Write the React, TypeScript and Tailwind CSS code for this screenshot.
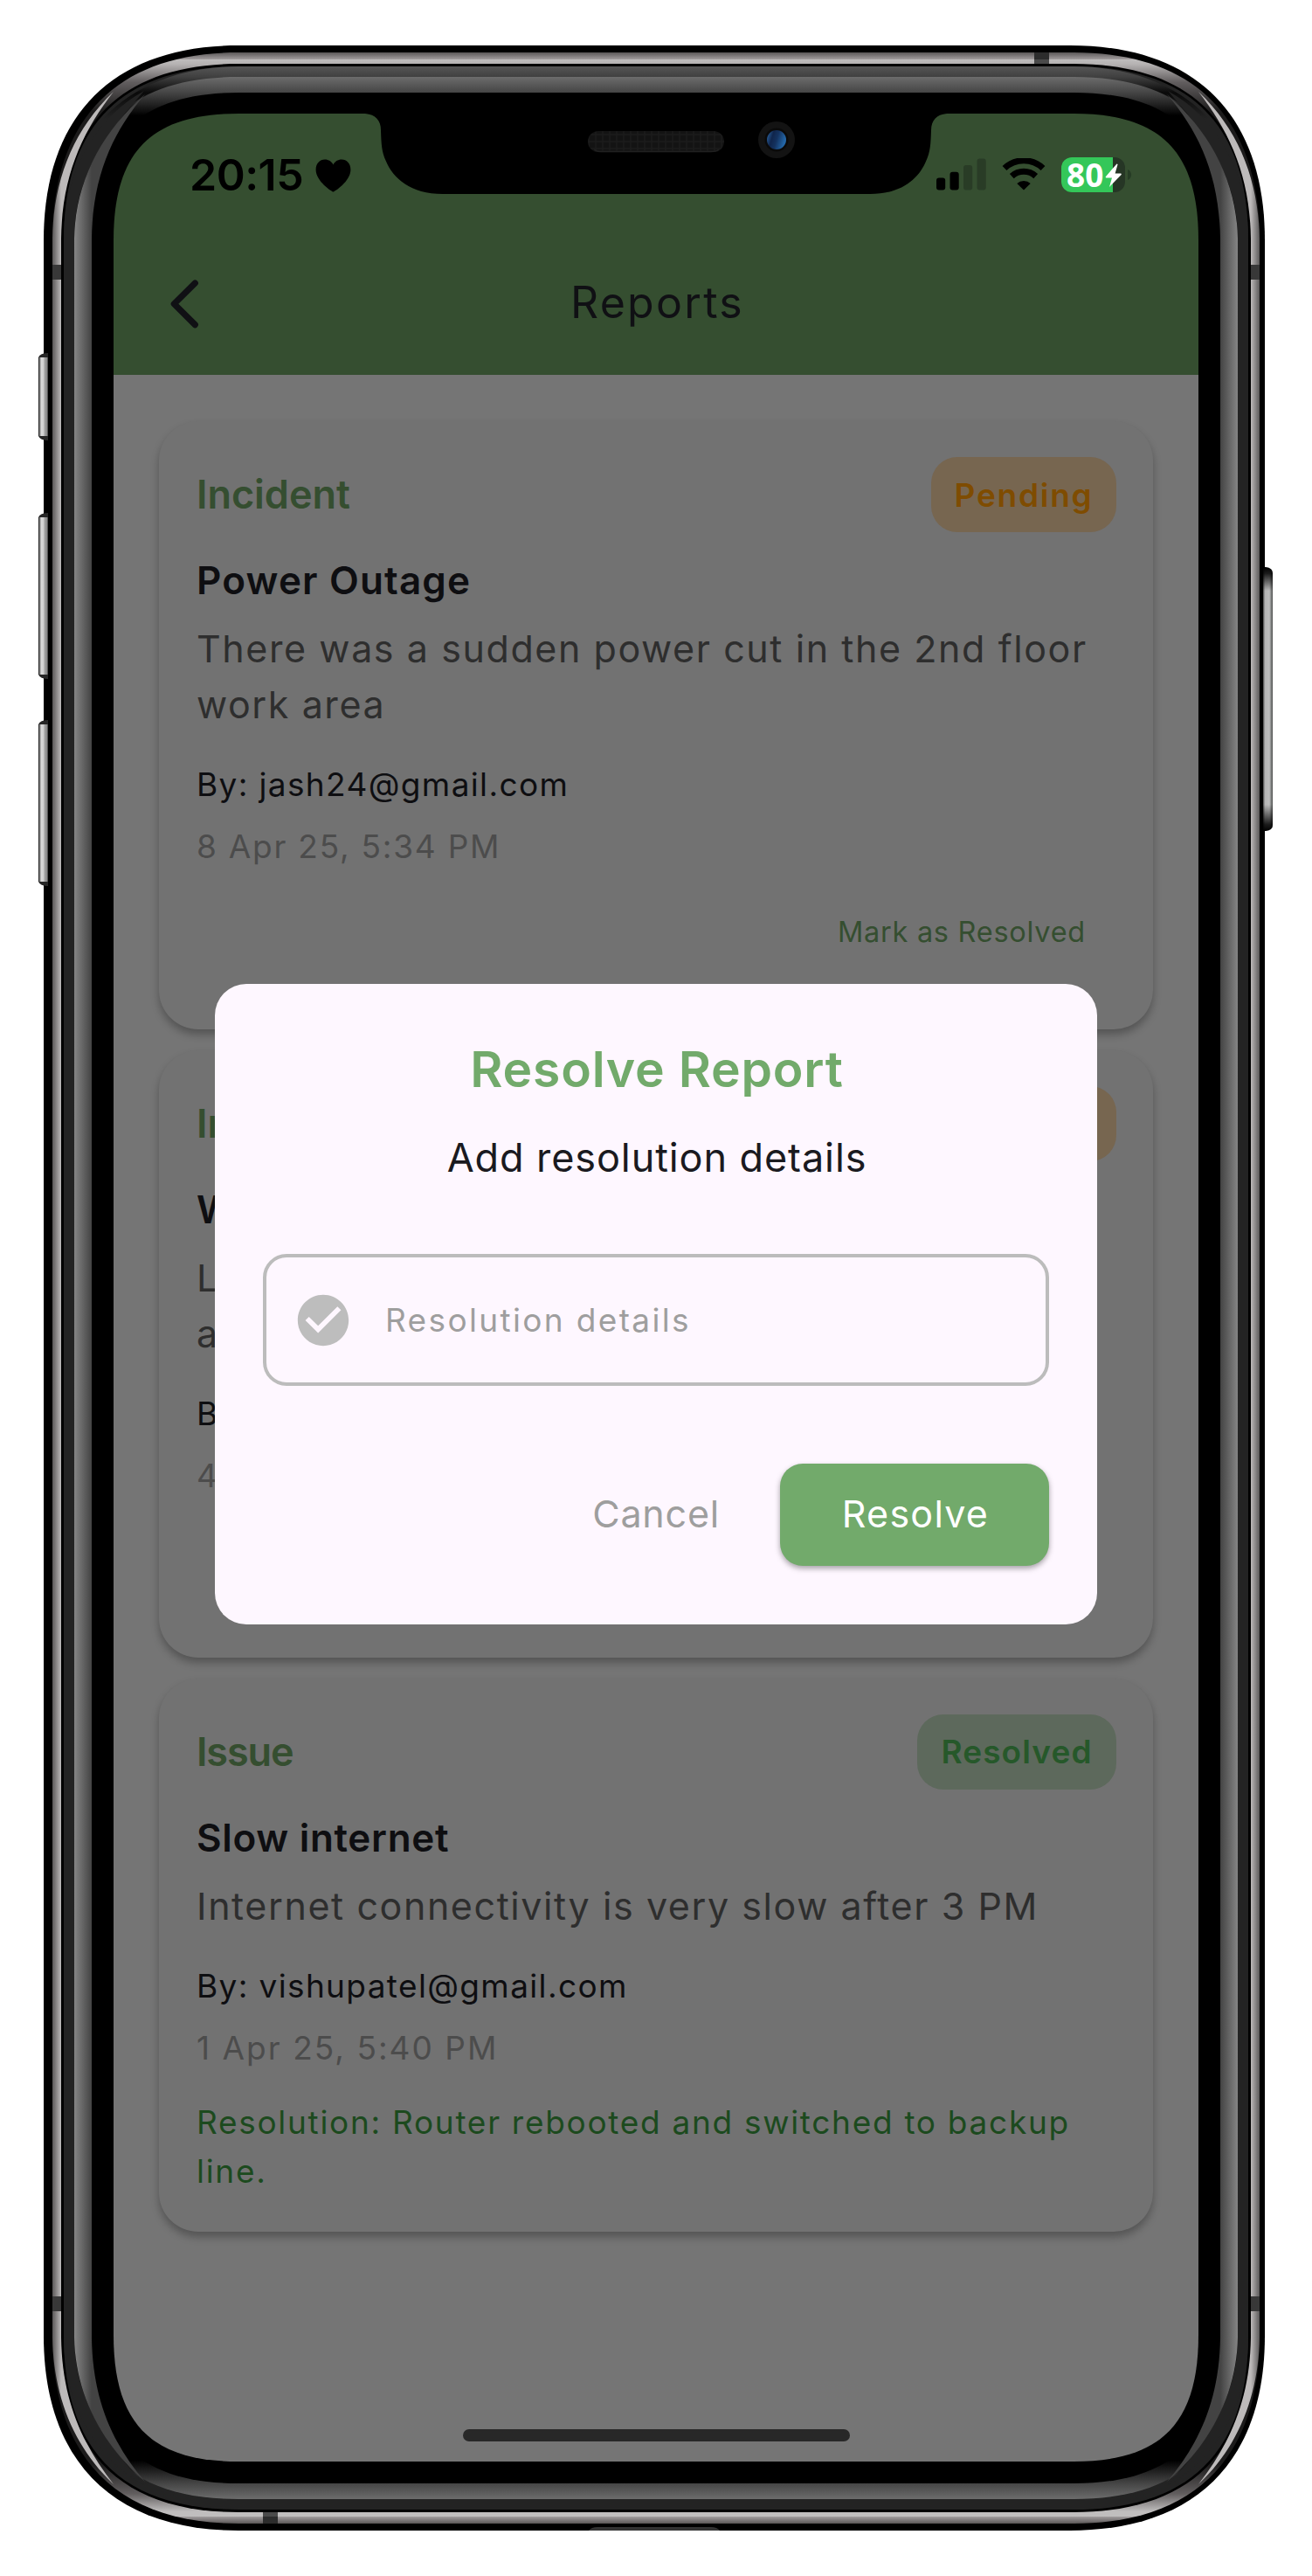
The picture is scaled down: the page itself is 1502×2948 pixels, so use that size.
import { MdCheckCircle } from "react-icons/md";

type Report = {
  kind: string;
  kindTracking: string;
  status: "Pending" | "Resolved";
  title: string;
  titleTracking: string;
  body: string;
  by: string;
  date: string;
  dateTracking: string;
  resolution?: string;
  height: string;
};

const reports: Report[] = [
  {
    kind: "Incident",
    kindTracking: "tracking-[-0.03px]",
    status: "Pending",
    title: "Power Outage",
    titleTracking: "tracking-[1.15px]",
    body: "There was a sudden power cut in the 2nd floor work area",
    by: "jash24@gmail.com",
    date: "8 Apr 25, 5:34 PM",
    dateTracking: "tracking-[1.76px]",
    height: "h-[695.5px]",
  },
  {
    kind: "Incident",
    kindTracking: "tracking-[-0.03px]",
    status: "Pending",
    title: "Water Leakage",
    titleTracking: "tracking-[1.15px]",
    body: "Leakage was noticed near the pantry sink area and corridor",
    by: "jash24@gmail.com",
    date: "4 Apr 25, 5:34 PM",
    dateTracking: "tracking-[1.76px]",
    height: "h-[695.5px]",
  },
  {
    kind: "Issue",
    kindTracking: "tracking-[-1.1px]",
    status: "Resolved",
    title: "Slow internet",
    titleTracking: "tracking-[0.69px]",
    body: "Internet connectivity is very slow after 3 PM",
    by: "vishupatel@gmail.com",
    date: "1 Apr 25, 5:40 PM",
    dateTracking: "tracking-[2.03px]",
    resolution: "Router rebooted and switched to backup line.",
    height: "h-[633px]",
  },
];

function StatusBar() {
  return (
    <div className="flex h-[140px] shrink-0 items-center justify-between pl-[87px] pr-[74px]">
      <div className="flex items-center gap-[14px]">
        <span className="text-[50px] leading-[60px] font-semibold tracking-[-0.5px] text-black">20:15</span>
        <svg width="41" height="38" viewBox="0 0 41 38" className="mt-px">
          <path
            d="M20.5 37.5C19.4 37.5 0.6 25.6 0.6 12.2C0.6 5.2 5.2 0.6 10.9 0.6C15.2 0.6 18.6 2.9 20.5 6.5C22.4 2.9 25.8 0.6 30.1 0.6C35.8 0.6 40.4 5.2 40.4 12.2C40.4 25.6 21.6 37.5 20.5 37.5Z"
            fill="#000"
          />
        </svg>
      </div>
      <div className="flex items-center gap-[18px]">
        <svg width="57" height="38" viewBox="0 0 57 38">
          <rect x="0" y="22.5" width="10.2" height="14" rx="3" fill="#000" />
          <rect x="15.5" y="15.8" width="10.2" height="20.7" rx="3" fill="#000" />
          <rect x="31" y="8" width="10.2" height="28.5" rx="3" fill="#293c26" />
          <rect x="46.5" y="0.4" width="10.2" height="36.1" rx="3" fill="#293c26" />
        </svg>
        <svg width="50" height="38" viewBox="0 0 50 38">
          <path d="M3 11.5A32 32 0 0 1 47 11.5" fill="none" stroke="#000" strokeWidth="7" />
          <path d="M11.3 20.6A20 20 0 0 1 38.7 20.6" fill="none" stroke="#000" strokeWidth="7" />
          <path d="M25 36.6L17.3 29A11.4 11.4 0 0 1 32.7 29Z" fill="#000" />
        </svg>
        <div className="flex items-center">
          <div className="relative flex h-[40px] w-[73px] items-center overflow-hidden rounded-[12px] bg-[#263625]">
            <div className="absolute inset-y-0 left-0 w-[59px] bg-[#34c759]" />
            <span className="relative pl-[6px] font-['Open_Sans'] text-[37px] leading-[40px] font-bold text-white">80</span>
            <svg className="absolute left-[50px] top-[7px]" width="20" height="28" viewBox="0 0 20 28">
              <path d="M13.5 0.5L0.8 15.2Q0.4 16.4 1.6 16.4H8L5 27L18.6 13Q19.4 11.6 17.8 11.4H11.6L14.6 1Z" fill="#fff" />
            </svg>
          </div>
          <svg width="7" height="12" viewBox="0 0 7 12" className="ml-[3px]">
            <path d="M0 0C5.5 2 5.5 10 0 12Z" fill="#263c25" />
          </svg>
        </div>
      </div>
    </div>
  );
}

function TitleBar() {
  return (
    <div className="relative flex flex-1 items-start justify-center pt-[48px]">
      <svg className="absolute left-[64px] top-[48px]" width="36" height="60" viewBox="0 0 36 60">
        <path d="M29.3 6L5.3 29.8L29.3 53.6" fill="none" stroke="#101014" strokeWidth="7.2" strokeLinecap="round" strokeLinejoin="round" />
      </svg>
      <h1 className="pl-[3px] text-[50px] leading-[56px] tracking-[2.3px] text-[#101014]">Reports</h1>
    </div>
  );
}

function StatusBadge({ status }: { status: Report["status"] }) {
  return status === "Pending" ? (
    <span className="flex h-[86px] w-[212px] items-center justify-center rounded-[30px] bg-[#776650] pt-[2px] text-[37px] font-semibold tracking-[1.75px] text-[#7f4c00]">
      Pending
    </span>
  ) : (
    <span className="flex h-[86px] w-[228px] items-center justify-center rounded-[30px] bg-[#5d695c] text-[37px] font-semibold tracking-[1.1px] text-[#26582a]">
      Resolved
    </span>
  );
}

function ReportCard({ report }: { report: Report }) {
  return (
    <article
      className={`${report.height} flex shrink-0 flex-col rounded-[45px] bg-[#727272] pt-[41px] pr-[42px] pl-[43px] shadow-[0_6px_10px_0px_rgba(0,0,0,0.28)]`}
    >
      <div className="flex h-[86px] items-center justify-between">
        <h2 className={`${report.kindTracking} text-[45px] leading-[60px] font-semibold text-[#354e30]`}>{report.kind}</h2>
        <StatusBadge status={report.status} />
      </div>
      <h3 className={`${report.titleTracking} mt-[25px] text-[44px] leading-[60px] font-semibold text-[#0e0e11]`}>{report.title}</h3>
      <p className="-mr-[6px] mt-[16px] text-[43px] leading-[64px] tracking-[1.58px] text-[#2e2e2e]">{report.body}</p>
      <p className="mt-[35px] text-[37px] leading-[50px] tracking-[1.36px] text-[#0e0e11]">By: {report.by}</p>
      <p className={`${report.dateTracking} mt-[21px] text-[37px] leading-[50px] text-[#4c4c4c]`}>{report.date}</p>
      {report.resolution ? (
        <p className="mt-[32px] text-[37px] leading-[55.5px] tracking-[1.7px] text-[#1c4a1e]">Resolution: {report.resolution}</p>
      ) : (
        <button className="mt-[48px] mr-[35px] self-end text-[32.5px] leading-[50px] tracking-[0.73px] text-[#354e30]">Mark as Resolved</button>
      )}
    </article>
  );
}

function ResolveDialog() {
  return (
    <div
      role="dialog"
      className="absolute left-[116px] top-[995.5px] flex h-[733px] w-[1010px] flex-col rounded-[36px] bg-[#fef7ff] px-[55px] pt-[60px]"
    >
      <h2 className="pl-[2px] text-center text-[57px] leading-[76px] font-semibold tracking-[0.8px] text-[#72aa6b]">Resolve Report</h2>
      <p className="mt-[33px] pl-[2px] text-center text-[45px] leading-[60px] tracking-[0.9px] text-[#1a1a1f]">Add resolution details</p>
      <label className="mt-[80.5px] flex h-[151px] items-center rounded-[27px] border-4 border-[#bcbcbc] pl-[30px]">
        <MdCheckCircle className="size-[70px] text-[#bdbdbd]" />
        <span className="ml-[36px] text-[37px] leading-[50px] tracking-[2.35px] text-[#9e9e9e]">Resolution details</span>
      </label>
      <div className="mt-[88.5px] flex h-[117px] items-center justify-end">
        <button className="mr-[69px] pb-[2px] text-[43px] tracking-[0.8px] text-[#9e9e9e]">Cancel</button>
        <button className="h-[117px] w-[308px] rounded-[26px] bg-[#72aa6b] pb-[2px] pl-[2px] text-[43px] tracking-[1.25px] text-white shadow-[0_3px_6px_rgba(0,0,0,0.35)]">
          Resolve
        </button>
      </div>
    </div>
  );
}

/** Rounded rectangle with continuous corners that begin at `corner` on both axes. */
function shell(x0: number, y0: number, x1: number, y1: number, k: number, corner = 273) {
  const lx = corner - x0;
  const ly = corner + 2 - y0;
  const hx = lx * (1 - k);
  const hy = ly * (1 - k);
  return [
    `M${x0 + lx} ${y0}H${x1 - lx}`,
    `C${x1 - hx} ${y0} ${x1} ${y0 + hy} ${x1} ${y0 + ly}`,
    `V${y1 - ly}`,
    `C${x1} ${y1 - hy} ${x1 - hx} ${y1} ${x1 - lx} ${y1}`,
    `H${x0 + lx}`,
    `C${x0 + hx} ${y1} ${x0} ${y1 - hy} ${x0} ${y1 - ly}`,
    `V${y0 + ly}`,
    `C${x0} ${y0 + hy} ${x0 + hx} ${y0} ${x0 + lx} ${y0}Z`,
  ].join("");
}

const NOTCH = "M418 130C430 131 436 138 436 149C436.5 165 437 174 441.7 184C450 204 470 222 507 222H996C1033 222 1052 204 1060.3 184C1065 174 1065.5 165 1066 149C1066 138 1072 131 1084 130V129H418Z";

function SideHighlights() {
  return (
    <g>
      <path d="M73 273C73 200 108 135 165 104C125 150 85 200 85 273V2675C85 2748 125 2798 165 2844C108 2813 73 2748 73 2675Z" fill="#232323" />
      <path d="M85 273C86 210 115 152 166 108C130 150 106 200 105 273V2675C106 2748 130 2798 166 2840C115 2796 86 2738 85 2675Z" fill="url(#sideRing)" />
      <path d="M60 273C61 210 82 150 130 105C95 150 71 200 70 273V2675C71 2748 95 2798 130 2843C82 2798 61 2738 60 2675Z" fill="url(#sideMetal)" />
    </g>
  );
}

function SideButton({ y, height }: { y: number; height: number }) {
  return (
    <g>
      <path d={`M44 ${y + 5}Q46 ${y} 55 ${y}V${y + height}Q46 ${y + height} 44 ${y + height - 5}Z`} fill="#262626" />
      <rect x="45" y={y + 5} width="10" height={height - 10} fill="url(#buttonMetal)" />
    </g>
  );
}

function PhoneFrame() {
  return (
    <svg className="pointer-events-none absolute inset-0" width="1502" height="2948" viewBox="0 0 1502 2948">
      <defs>
        <linearGradient id="capMetal" gradientUnits="userSpaceOnUse" x1="0" y1="60" x2="0" y2="2888">
          <stop offset="0" stopColor="#5a5757" />
          <stop offset="0.0028" stopColor="#a19c9d" />
          <stop offset="0.0029" stopColor="#bfbdbd" />
          <stop offset="0.0048" stopColor="#b5b2b2" />
          <stop offset="0.012" stopColor="#625e5f" />
          <stop offset="0.024" stopColor="#1c1b1b" />
          <stop offset="0.976" stopColor="#1c1b1b" />
          <stop offset="0.988" stopColor="#625e5f" />
          <stop offset="0.9952" stopColor="#c0bebe" />
          <stop offset="0.9971" stopColor="#c0bebe" />
          <stop offset="0.9972" stopColor="#a19c9d" />
          <stop offset="1" stopColor="#5a5757" />
        </linearGradient>
        <linearGradient id="capDark" gradientUnits="userSpaceOnUse" x1="0" y1="76" x2="0" y2="136">
          <stop offset="0" stopColor="#565656" />
          <stop offset="0.2" stopColor="#404040" />
          <stop offset="0.5" stopColor="#0a0a0a" />
          <stop offset="0.7" stopColor="#141414" />
          <stop offset="1" stopColor="#232323" />
        </linearGradient>
        <linearGradient id="capRing" gradientUnits="userSpaceOnUse" x1="0" y1="88" x2="0" y2="2860">
          <stop offset="0" stopColor="#6c6c6c" />
          <stop offset="0.0065" stopColor="#454545" />
          <stop offset="0.016" stopColor="#000" />
          <stop offset="0.984" stopColor="#000" />
          <stop offset="0.9935" stopColor="#454545" />
          <stop offset="1" stopColor="#6c6c6c" />
        </linearGradient>
        <linearGradient id="sideRing" gradientUnits="userSpaceOnUse" x1="85" y1="0" x2="105" y2="0">
          <stop offset="0" stopColor="#858585" />
          <stop offset="1" stopColor="#434343" />
        </linearGradient>
        <linearGradient id="sideMetal" gradientUnits="userSpaceOnUse" x1="60" y1="0" x2="70" y2="0">
          <stop offset="0" stopColor="#5b5959" />
          <stop offset="1" stopColor="#bdbaba" />
        </linearGradient>
        <linearGradient id="buttonMetal" x1="0" y1="0" x2="1" y2="0">
          <stop offset="0" stopColor="#6c6c6c" />
          <stop offset="0.25" stopColor="#dadada" />
          <stop offset="0.5" stopColor="#cfcfcf" />
          <stop offset="0.6" stopColor="#a4a4a4" />
          <stop offset="0.85" stopColor="#8c8c8c" />
          <stop offset="1" stopColor="#3b3b3b" />
        </linearGradient>
        <linearGradient id="powerMetal" x1="0" y1="0" x2="1" y2="0">
          <stop offset="0" stopColor="#454545" />
          <stop offset="0.2" stopColor="#b4b4b4" />
          <stop offset="0.65" stopColor="#bdbdbd" />
          <stop offset="0.85" stopColor="#7d7f7e" />
          <stop offset="1" stopColor="#4a4a4a" />
        </linearGradient>
        <linearGradient id="powerFade" x1="0" y1="0" x2="0" y2="1">
          <stop offset="0" stopColor="#000" />
          <stop offset="0.025" stopColor="#000" stopOpacity="0.85" />
          <stop offset="0.09" stopColor="#000" stopOpacity="0" />
          <stop offset="0.9" stopColor="#000" stopOpacity="0" />
          <stop offset="0.975" stopColor="#000" stopOpacity="0.85" />
          <stop offset="1" stopColor="#000" />
        </linearGradient>
        <linearGradient id="lens" x1="0" y1="0" x2="1" y2="0.3">
          <stop offset="0" stopColor="#2f6eae" />
          <stop offset="0.35" stopColor="#10254c" />
          <stop offset="0.6" stopColor="#14325f" />
          <stop offset="1" stopColor="#2467a8" />
        </linearGradient>
        <pattern id="grille" width="8" height="8" patternUnits="userSpaceOnUse">
          <rect width="8" height="8" fill="#131313" />
          <path d="M0 2H8M2 0V8" stroke="#1b1b1b" strokeWidth="1.5" />
        </pattern>
        <mask id="screenHole">
          <rect width="1502" height="2948" fill="#fff" />
          <path d={shell(130, 130, 1372, 2817, 0.7)} fill="#000" />
          <path d={NOTCH} fill="#fff" />
        </mask>
      </defs>

      <g mask="url(#screenHole)">
        <path d={shell(50, 52, 1448, 2896, 0.643)} fill="#000" />
        <path d={shell(60, 60, 1442, 2888, 0.65)} fill="url(#capMetal)" />
        <path d={shell(70, 73, 1432, 2875, 0.66)} fill="#000" />
        <path d={shell(73, 76, 1429, 2872, 0.665)} fill="#232323" />
        <path d="M273 76H1229C1310 76 1375 110 1405 165L1330 130H170L97 165C127 110 192 76 273 76Z" fill="url(#capDark)" />
        <path d={shell(85, 88, 1417, 2860, 0.67)} fill="url(#capRing)" />
        <path d={shell(105, 106, 1397, 2842, 0.685)} fill="#000" />
        <SideHighlights />
        <g transform="translate(1502 0) scale(-1 1)">
          <SideHighlights />
        </g>

        {[303, 2628].map((y) => (
          <g key={y}>
            <rect x="60" y={y} width="10" height="17" fill="#383838" />
            <rect x="1432" y={y} width="10" height="17" fill="#383838" />
          </g>
        ))}
        <rect x="1184" y="60" width="17" height="8" fill="#2c2c2c" />
        <rect x="1184" y="68" width="17" height="5" fill="#4a4a4a" />
        <rect x="301" y="2875" width="17" height="5" fill="#4a4a4a" />
        <rect x="301" y="2880" width="17" height="8" fill="#2c2c2c" />
        <path d="M674 2896Q677 2892 684 2892H814Q821 2892 824 2896Z" fill="#333" />

        <rect x="673" y="150" width="156" height="24" rx="12" fill="url(#grille)" />
        <path d="M680 171Q683 173.500 688 173.500H814Q820 173.500 823 171" fill="none" stroke="#202020" strokeWidth="1.5" />
        <circle cx="889" cy="160" r="21" fill="#131313" />
        <circle cx="889" cy="160" r="13.500" fill="#0a0a0a" />
        <circle cx="889" cy="160" r="11" fill="url(#lens)" />
      </g>

      <SideButton y={404} height={100} />
      <SideButton y={587} height={190} />
      <SideButton y={824} height={190} />
      <path d="M1446 649H1449Q1457 650 1457 656V944Q1457 950 1449 951H1446Z" fill="url(#powerMetal)" />
      <path d="M1446 649H1449Q1457 650 1457 656V944Q1457 950 1449 951H1446Z" fill="url(#powerFade)" />
    </svg>
  );
}

export default function App() {
  return (
    <div className="relative h-[2948px] w-[1502px] overflow-hidden bg-white p-[130px] font-['Inter',sans-serif]">
      <div className="relative flex h-[2687px] w-[1242px] flex-col overflow-hidden rounded-[100px] bg-[#757575]">
        <header className="flex h-[299px] shrink-0 flex-col bg-[#354e30]">
          <StatusBar />
          <TitleBar />
        </header>
        <main className="flex flex-1 flex-col gap-[24px] px-[52px] pt-[53px]">
          {reports.map((report) => (
            <ReportCard key={report.kind + report.title} report={report} />
          ))}
        </main>
        <div className="mb-[23px] h-[14px] w-[443px] shrink-0 self-center rounded-full bg-[#282828]" />
        <ResolveDialog />
      </div>
      <PhoneFrame />
    </div>
  );
}
